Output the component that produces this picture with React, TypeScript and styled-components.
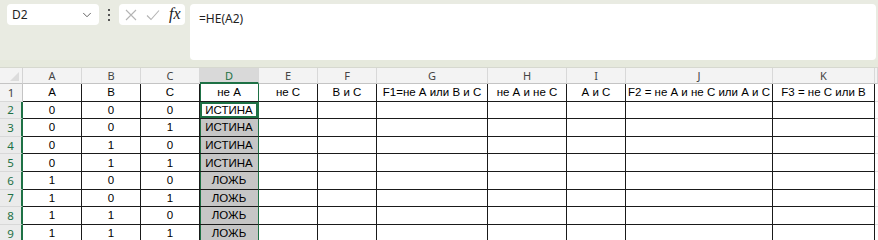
import styled, { createGlobalStyle } from "styled-components";
import { ChevronDown } from "lucide-react";

const GREEN = "#1e7145";
const LINE = "#1a1a1a";

const columns = [
  { name: "A", width: 59 },
  { name: "B", width: 59 },
  { name: "C", width: 59 },
  { name: "D", width: 59 },
  { name: "E", width: 59 },
  { name: "F", width: 59 },
  { name: "G", width: 111 },
  { name: "H", width: 79 },
  { name: "I", width: 59 },
  { name: "J", width: 147 },
  { name: "K", width: 102 },
];

const titles = [
  "A",
  "B",
  "C",
  "не А",
  "не С",
  "В и С",
  "F1=не А или В и С",
  "не А и не С",
  "А и С",
  "F2 = не А и не С или А и С",
  "F3 = не С или В",
];

const bits = [
  [0, 0, 0],
  [0, 0, 1],
  [0, 1, 0],
  [0, 1, 1],
  [1, 0, 0],
  [1, 0, 1],
  [1, 1, 0],
  [1, 1, 1],
];

type Tone = "plain" | "head" | "active" | "picked";

export default function App() {
  return (
    <>
      <GlobalStyle />
      <Page>
        <TopBar>
          <NameBox>
            <span>D2</span>
            <ChevronDown size={14} strokeWidth={1.4} color="#444" />
          </NameBox>
          <Dots>
            <svg width="4" height="14" viewBox="0 0 4 14">
              <rect x="1" y="1" width="2" height="2" fill="#555" />
              <rect x="1" y="6" width="2" height="2" fill="#555" />
              <rect x="1" y="11" width="2" height="2" fill="#555" />
            </svg>
          </Dots>
          <EditButtons>
            <svg width="12" height="12" viewBox="0 0 12 12">
              <path d="M1 1 L11 11 M11 1 L1 11" stroke="#b4b4b4" strokeWidth="1.1" fill="none" />
            </svg>
            <svg width="14" height="12" viewBox="0 0 14 12">
              <path d="M1 6.5 L5 10.5 L13 1.5" stroke="#b4b4b4" strokeWidth="1.1" fill="none" />
            </svg>
            <Fx>fx</Fx>
          </EditButtons>
          <FormulaBox>=НЕ(A2)</FormulaBox>
        </TopBar>
        <Strip />
        <Sheet>
          <Corner />
          {columns.map((c) => (
            <ColHeader key={c.name} $selected={c.name === "D"}>
              {c.name}
            </ColHeader>
          ))}
          <ColHeader $selected={false} />

          <RowHeader $selected={false}>1</RowHeader>
          {titles.map((t, i) => (
            <Cell key={t} $tone={i === 3 ? "head" : "plain"}>
              {t}
            </Cell>
          ))}
          <Spare />

          {bits.map((row, r) => (
            <Row key={r} index={r} values={row} />
          ))}
        </Sheet>
      </Page>
    </>
  );
}

const Row = ({ index, values }: { index: number; values: number[] }) => (
  <>
    <RowHeader $selected>{index + 2}</RowHeader>
    {values.map((v, i) => (
      <Cell key={i} $tone="plain">
        {v}
      </Cell>
    ))}
    <Cell $tone={index === 0 ? "active" : "picked"}>{values[0] ? "ЛОЖЬ" : "ИСТИНА"}</Cell>
    {columns.slice(4).map((c) => (
      <Cell key={c.name} $tone="plain" />
    ))}
    <Spare />
  </>
);

const GlobalStyle = createGlobalStyle`
  body {
    margin: 0;
    background: #ffffff;
    font-family: "Liberation Sans", Arial, sans-serif;
  }
`;

const Page = styled.div`
  width: 878px;
  height: 240px;
  overflow: hidden;
  background: #ffffff;
`;

const TopBar = styled.div`
  display: flex;
  align-items: flex-start;
  height: 60px;
  padding: 4px 2px 0 7px;
  box-sizing: border-box;
  background: #e9ebe2;
`;

const NameBox = styled.div`
  display: flex;
  align-items: center;
  justify-content: space-between;
  width: 92px;
  height: 21px;
  padding: 0 5px 0 5px;
  box-sizing: border-box;
  background: #ffffff;
  border-radius: 4px;
  font-family: "Noto Sans", sans-serif;
  font-size: 12px;
  color: #1f1f1f;
`;

const Dots = styled.div`
  display: flex;
  align-items: center;
  justify-content: center;
  width: 20px;
  height: 21px;
`;

const EditButtons = styled.div`
  display: flex;
  align-items: center;
  gap: 9px;
  width: 66px;
  height: 21px;
  padding-left: 6px;
  box-sizing: border-box;
  background: #ffffff;
  border-radius: 4px;
`;

const Fx = styled.span`
  font-family: "Liberation Serif", serif;
  font-style: italic;
  font-size: 16px;
  color: #222;
  margin-top: -2px;
`;

const FormulaBox = styled.div`
  flex: 1;
  height: 56px;
  margin-left: 5px;
  padding: 6px 9px;
  box-sizing: border-box;
  background: #ffffff;
  border-radius: 4px;
  font-family: "Noto Sans", sans-serif;
  font-size: 12px;
  color: #1f1f1f;
`;

const Strip = styled.div`
  height: 8px;
  background: #e6e9dd;
  border-bottom: 1px solid #d6d8cf;
  box-sizing: border-box;
`;

const Sheet = styled.div`
  display: grid;
  grid-template-columns: 23px ${columns.map((c) => `${c.width}px`).join(" ")} 1fr;
  grid-template-rows: 16px repeat(9, 17.6px);
  font-size: 11.5px;
  color: #000;
`;

const Corner = styled.div`
  position: relative;
  background: #f3f3f3;
  border-right: 1px solid #d4d4d4;
  border-bottom: 1px solid #c4c4c4;

  &::after {
    content: "";
    position: absolute;
    right: 3px;
    bottom: 2px;
    border-style: solid;
    border-width: 0 0 9px 9px;
    border-color: transparent transparent #dcdcdc transparent;
  }
`;

const ColHeader = styled.div<{ $selected: boolean }>`
  display: flex;
  align-items: center;
  justify-content: center;
  font-family: "Noto Sans", sans-serif;
  font-size: 11px;
  background: ${({ $selected }) => ($selected ? "#d9d9d9" : "#f3f3f3")};
  color: ${({ $selected }) => ($selected ? GREEN : "#444")};
  border-right: 1px solid #d8d8d8;
  border-bottom: ${({ $selected }) => ($selected ? `2px solid ${GREEN}` : "1px solid #c4c4c4")};
  box-sizing: border-box;
`;

const RowHeader = styled.div<{ $selected: boolean }>`
  display: flex;
  align-items: center;
  justify-content: center;
  font-family: "Noto Sans", sans-serif;
  font-size: 11.5px;
  background: ${({ $selected }) => ($selected ? "#ebebeb" : "#f3f3f3")};
  color: ${({ $selected }) => ($selected ? GREEN : "#444")};
  border-right: ${({ $selected }) => ($selected ? `2px solid ${GREEN}` : "1px solid #c4c4c4")};
  border-bottom: 1px solid #d8d8d8;
  box-sizing: border-box;
`;

const toneStyles: Record<Tone, string> = {
  plain: `background: #ffffff;`,
  head: `
    background: #ffffff;
    border-right-color: ${GREEN};
    box-shadow: inset 1px 0 0 ${GREEN};
  `,
  active: `
    background: #ffffff;
    border-right-color: ${GREEN};
    box-shadow: inset 0 0 0 2px ${GREEN};
  `,
  picked: `
    background: #c6c6c6;
    border-right-color: ${GREEN};
    box-shadow: inset 1px 0 0 ${GREEN};
  `,
};

const Cell = styled.div<{ $tone: Tone }>`
  display: flex;
  align-items: center;
  justify-content: center;
  white-space: nowrap;
  overflow: visible;
  border-right: 1px solid ${LINE};
  border-bottom: 1px solid ${LINE};
  box-sizing: border-box;
  ${({ $tone }) => toneStyles[$tone]}
`;

const Spare = styled.div`
  background: #ffffff;
  border-bottom: 1px solid #e1e1e1;
`;
